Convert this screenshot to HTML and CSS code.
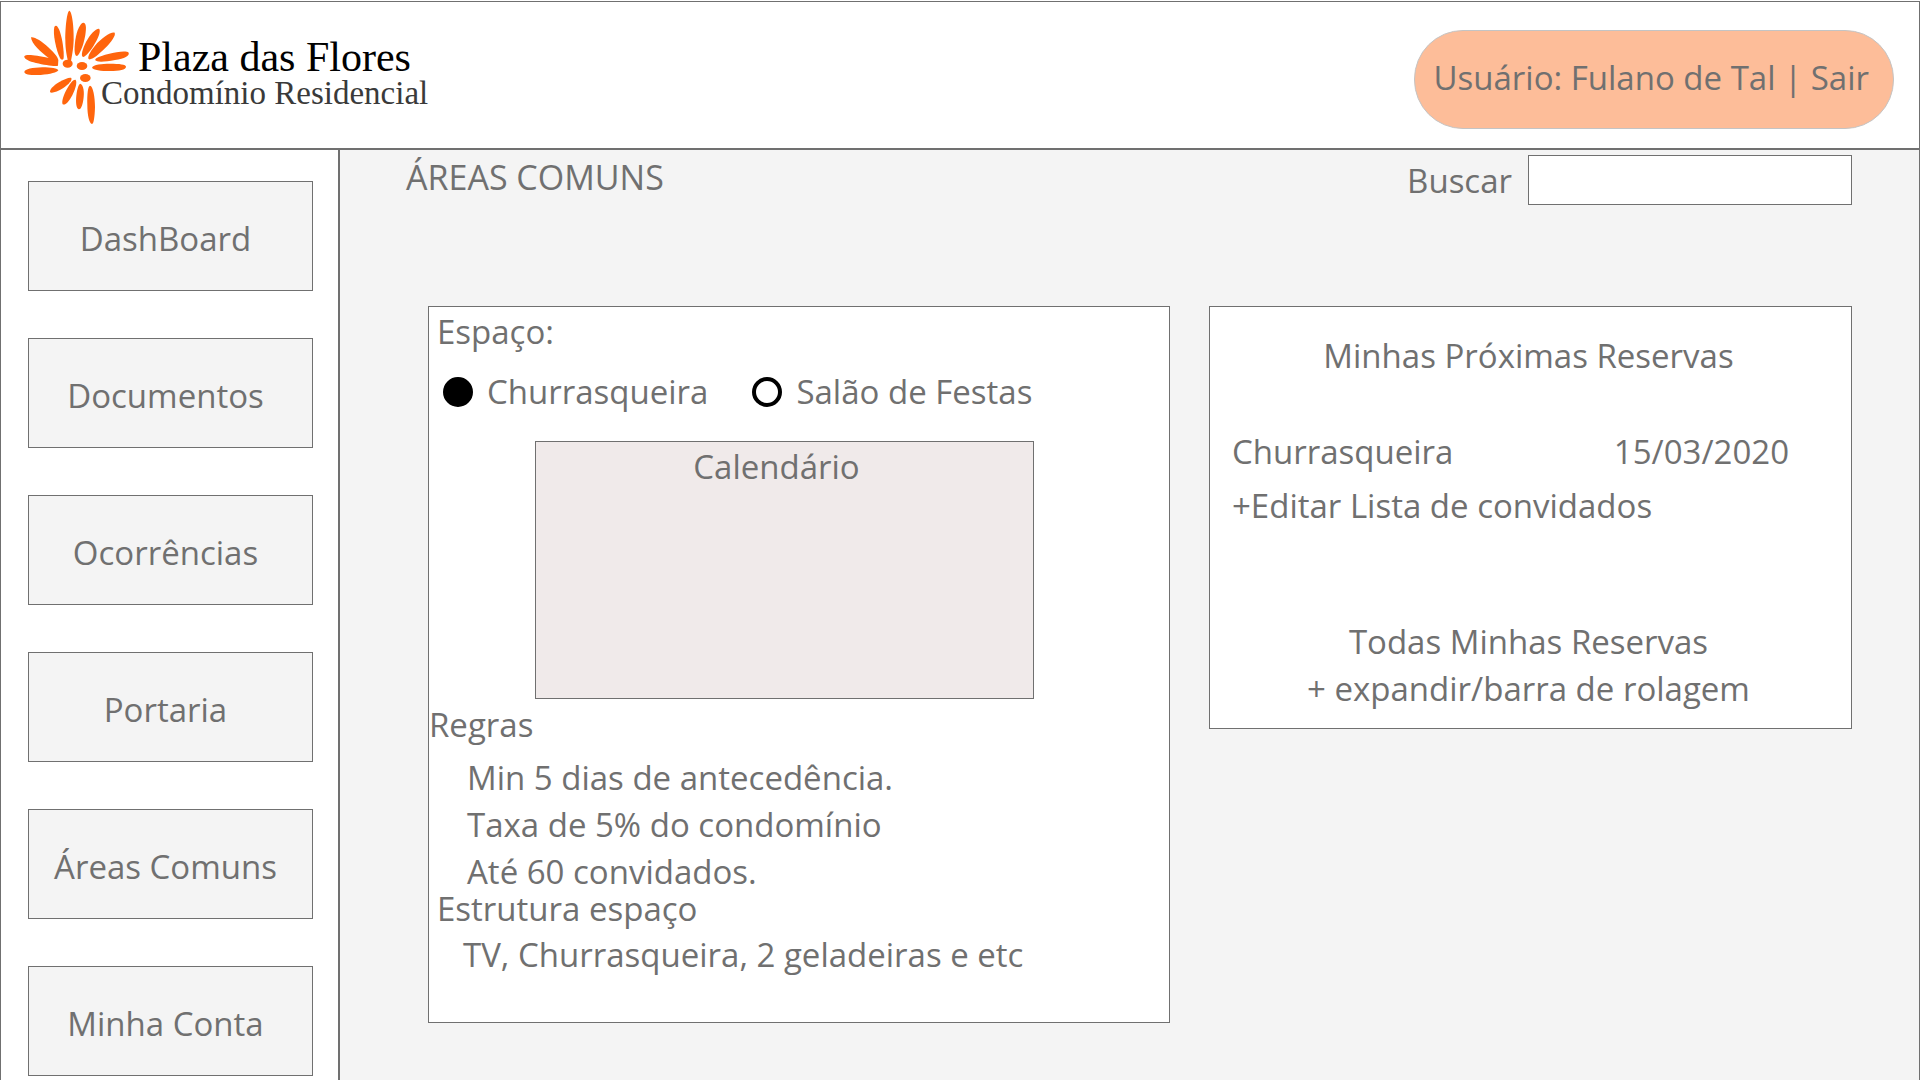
FILE: index.html
```html
<!DOCTYPE html>
<html lang="pt-BR">
<head>
<meta charset="utf-8">
<title>Plaza das Flores - Áreas Comuns</title>
<link rel="stylesheet" href="styles.css">
</head>
<body>
<div class="app">
  <header class="header">
    <div class="brand">
      <svg class="brand-flower" viewBox="72 30 318 345" aria-hidden="true">
        <g fill="#ff650d">
          <path d="M208 32C216 34 222 80 221 120C220 150 215 170 213 184H204C201 168 196 150 196 120C196 80 201 34 208 32Z"/>
          <path d="M168 77C180 78 193 140 191 174C190 180 184 181 180 174C168 150 158 100 163 81Q165 77 168 77Z"/>
          <path d="M251 68C260 70 259 90 254 115C249 140 238 165 231 168C223 168 222 150 226 120C230 90 242 67 251 68Z"/>
          <path d="M297 86C303 91 297 110 285 130C273 152 257 171 249 171C242 168 247 148 258 126C270 103 288 85 297 86Z"/>
          <path d="M344 98C348 106 335 125 315 145C295 165 276 180 267 178C261 173 268 158 285 137C304 114 334 94 344 98Z"/>
          <path d="M386 158C389 168 374 175 345 180C315 186 290 187 286 181C284 175 298 169 325 162C352 155 380 152 386 158Z"/>
          <path d="M276 203C280 193 305 191 330 191C358 191 378 193 378 200C378 209 358 213 330 213C303 213 279 210 276 203Z"/>
          <path d="M93 112C102 109 125 123 144 141C161 157 173 170 175 180L174 197C164 200 135 195 108 189C86 184 71 176 73 169C77 162 105 165 146 174C124 158 94 131 93 112Z"/>
          <path d="M73 216C74 207 98 203 127 202C153 202 174 206 175 211C172 217 151 223 122 225C93 226 74 224 73 216Z"/>
          <path d="M214 234C217 241 207 252 190 264C171 276 153 281 150 276C149 268 161 256 178 246C195 236 210 231 214 234Z"/>
          <path d="M227 240C232 246 227 266 217 286C206 307 195 317 188 313C184 306 190 285 202 265C212 248 222 237 227 240Z"/>
          <path d="M241 251C251 255 254 276 250 299C247 320 241 330 235 327C227 323 227 298 230 279C233 262 237 251 241 251Z"/>
          <path d="M270 257C279 258 285 290 285 322C284 352 281 373 276 372C268 370 262 347 262 315C261 282 264 257 270 257Z"/>
          <ellipse cx="203" cy="191" rx="15" ry="12"/>
          <ellipse cx="246" cy="198" rx="16" ry="12"/>
          <ellipse cx="256" cy="234" rx="16" ry="12"/>
        </g>
      </svg>
      <div class="brand-text">
        <div class="brand-name">Plaza das Flores</div>
        <div class="brand-sub">Condomínio Residencial</div>
      </div>
    </div>
    <div class="user">Usuário: Fulano de Tal | <a href="#sair">Sair</a></div>
  </header>
  <div class="body">
    <nav class="sidebar" aria-label="Menu principal">
      <a class="nav-item" href="#dashboard">DashBoard</a>
      <a class="nav-item" href="#documentos">Documentos</a>
      <a class="nav-item" href="#ocorrencias">Ocorrências</a>
      <a class="nav-item" href="#portaria">Portaria</a>
      <a class="nav-item" href="#areas" aria-current="page">Áreas Comuns</a>
      <a class="nav-item" href="#conta">Minha Conta</a>
    </nav>
    <main class="main">
      <div class="toolbar">
        <h1 class="title">ÁREAS COMUNS</h1>
        <form class="search">
          <label for="busca">Buscar</label>
          <input id="busca" class="search-input" type="text">
        </form>
      </div>
      <div class="panels">
        <section class="panel">
          <fieldset class="spaces">
            <legend class="indent">Espaço:</legend>
            <div class="options">
              <label class="option"><input class="radio" type="radio" name="espaco" checked>Churrasqueira</label>
              <label class="option"><input class="radio" type="radio" name="espaco">Salão de Festas</label>
            </div>
          </fieldset>
          <div class="calendar">Calendário</div>
          <h2 class="rules-title">Regras</h2>
          <ul class="rules">
            <li>Min 5 dias de antecedência.</li>
            <li>Taxa de 5% do condomínio</li>
            <li>Até 60 convidados.</li>
          </ul>
          <h2 class="structure-title indent">Estrutura espaço</h2>
          <p class="structure">TV, Churrasqueira, 2 geladeiras e etc</p>
        </section>
        <section class="panel bookings">
          <h2 class="center">Minhas Próximas Reservas</h2>
          <div class="booking"><span>Churrasqueira</span><time datetime="2020-03-15">15/03/2020</time></div>
          <a class="edit" href="#convidados">+Editar Lista de convidados</a>
          <h2 class="center">Todas Minhas Reservas</h2>
          <a class="center" href="#todas">+ expandir/barra de rolagem</a>
        </section>
      </div>
    </main>
  </div>
</div>
</body>
</html>
```
FILE: styles.css
```css
* {
  box-sizing: border-box;
}

body {
  margin: 0;
  background: #fff;
  color: #707070;
  font: 33px/47px "Open Sans", "Noto Sans", sans-serif;
}

h1, h2, p, ul {
  margin: 0;
  padding: 0;
  font-size: inherit;
  font-weight: 400;
  list-style: none;
}

a {
  color: inherit;
  text-decoration: none;
}

.app {
  display: flex;
  flex-direction: column;
  min-height: calc(100vh - 1px);
  margin-top: 1px;
  border: 1px solid #707070;
  border-bottom: 0;
}

.header {
  display: flex;
  justify-content: space-between;
  align-items: flex-start;
  height: 148px;
  padding: 8px 25px 0 23px;
  border-bottom: 2px solid #707070;
}

.brand {
  display: flex;
  align-items: flex-start;
}

.brand-flower {
  width: 106px;
  height: 115px;
}

.brand-text {
  margin: 28px 0 0 -29px;
  font-family: "Liberation Serif", serif;
  white-space: nowrap;
}

.brand-name {
  padding-left: 37px;
  color: #000;
  font-size: 42px;
  line-height: 38px;
}

.brand-sub {
  color: #3a3a3a;
  font-size: 33px;
  line-height: 34px;
}

.user {
  margin-top: 20px;
  padding: 23px 24px 27px 18px;
  border: 1px solid #c4c4c4;
  border-radius: 49px;
  background: #fdbd99;
  white-space: nowrap;
}

.body {
  display: flex;
  flex: 1;
}

.sidebar {
  display: flex;
  flex: none;
  flex-direction: column;
  gap: 47px;
  width: 339px;
  padding: 31px 25px 4px 27px;
  border-right: 2px solid #707070;
}

.nav-item {
  height: 110px;
  padding: 33px 10px 0 0;
  border: 1px solid #707070;
  background: #f4f4f4;
  text-align: center;
}

.main {
  flex: 1;
  padding: 5px 67px 0 66px;
  background: #f4f4f4;
}

.toolbar {
  display: flex;
  justify-content: space-between;
  align-items: flex-start;
}

.title {
  font-size: 34px;
  line-height: 45px;
}

.search {
  display: flex;
  align-items: center;
  gap: 16px;
}

.search-input {
  width: 324px;
  height: 50px;
  padding: 0 8px;
  border: 1px solid #707070;
  background: #fff;
  color: inherit;
  font: inherit;
}

.panels {
  display: grid;
  grid-template-columns: 742fr 643fr;
  align-items: start;
  gap: 39px;
  margin: 101px 0 57px 22px;
}

.panel {
  padding: 1px 0 44px;
  border: 1px solid #707070;
  background: #fff;
}

.indent {
  padding-left: 8px;
}

.spaces {
  margin: 0;
  padding: 0;
  border: 0;
}

.spaces legend {
  padding-right: 0;
}

.options {
  display: flex;
  gap: 44px;
  padding: 13px 0 26px 14px;
}

.option {
  display: flex;
  align-items: center;
  gap: 14px;
}

.radio {
  appearance: none;
  width: 30px;
  height: 30px;
  margin: 0;
  border: 4px solid #000;
  border-radius: 50%;
  background: #fff;
}

.radio:checked {
  background: #000;
}

.calendar {
  height: 258px;
  margin: 0 135px 2px 106px;
  padding: 1px 16px 0 0;
  border: 1px solid #707070;
  background: #f0eaea;
  text-align: center;
}

.rules {
  padding: 6px 0 0 38px;
}

.structure-title {
  line-height: 28px;
}

.structure {
  padding: 8px 0 0 34px;
}

.bookings {
  display: flex;
  flex-direction: column;
  padding: 25px 0 16px;
}

.center {
  text-align: center;
}

.bookings .center {
  padding-right: 4px;
}

.booking {
  display: flex;
  justify-content: space-between;
  padding: 49px 62px 7px 22px;
}

.edit {
  margin: 0 22px 89px;
}
```
